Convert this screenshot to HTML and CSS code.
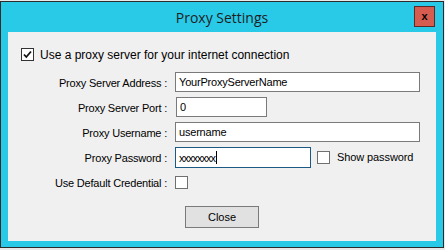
FILE: index.html
```html
<!DOCTYPE html>
<html lang="en">
<head>
    <meta charset="UTF-8">
    <title>Proxy Settings</title>
    <link rel="stylesheet" href="styles.css">
</head>
<body>
    <div class="window">
        <div class="titlebar">
            <span class="title">Proxy Settings</span>
            <button class="close-x">x</button>
        </div>
        <div class="content">
            <label class="check-row">
                <span class="box checked">
                    <svg width="11" height="11" viewBox="0 0 11 11"><path d="M2 5.5 L4.3 8 L9 2.5" fill="none" stroke="#111" stroke-width="1.8"/></svg>
                </span>
                Use a proxy server for your internet connection
            </label>

            <div class="form">
                <span class="label">Proxy Server Address :</span>
                <div class="field"><span class="input wide">YourProxyServerName</span></div>

                <span class="label">Proxy Server Port :</span>
                <div class="field"><span class="input port">0</span></div>

                <span class="label">Proxy Username :</span>
                <div class="field"><span class="input wide">username</span></div>

                <span class="label">Proxy Password :</span>
                <div class="field">
                    <span class="input pass focused"><span class="dots">xxxxxxxx</span><span class="caret"></span></span>
                    <span class="box"></span>
                    <span class="show">Show password</span>
                </div>

                <span class="label">Use Default Credential :</span>
                <div class="field"><span class="box"></span></div>
            </div>

            <div class="actions">
                <button class="button">Close</button>
            </div>
        </div>
    </div>
</body>
</html>
```

FILE: styles.css
```css
body {
    margin: 0;
    background: #e9e9e9;
    font-family: "Liberation Sans", Arial, sans-serif;
    font-size: 11px;
    color: #000;
}
.window {
    margin-top: 1px;
    width: 442px;
    height: 245px;
    border: 1px solid #2b2b2b;
    background: #29c9e8;
    display: flex;
    flex-direction: column;
}
.titlebar {
    height: 30px;
    position: relative;
    display: flex;
    align-items: center;
    justify-content: center;
}
.title {
    font-family: "Open Sans", "Noto Sans", sans-serif;
    font-size: 14px;
    color: #1e1e1e;
    margin-top: 1px;
}
.close-x {
    position: absolute;
    right: 8px;
    top: 4px;
    width: 21px;
    height: 21px;
    background: #d65c50;
    border: 1px solid #5a2a26;
    font-family: "Liberation Sans", Arial, sans-serif;
    font-weight: bold;
    font-size: 11px;
    padding: 0 0 2px 0;
    color: #000;
}
.content {
    margin: 0 7px 6px 7px;
    flex: 1;
    background: #f0f0f0;
    display: flex;
    flex-direction: column;
}
.check-row {
    display: flex;
    align-items: center;
    gap: 6px;
    margin: 16px 0 0 13px;
    height: 13px;
    font-size: 12px;
}
.box {
    width: 11px;
    height: 11px;
    border: 1px solid #707070;
    background: #fff;
    display: inline-flex;
    align-items: center;
    justify-content: center;
    flex: none;
}
.box.checked {
    border-color: #333;
}
.form {
    display: grid;
    grid-template-columns: 159px 1fr;
    column-gap: 8px;
    row-gap: 5px;
    margin-top: 11px;
    grid-auto-rows: 20px;
}
.label {
    text-align: right;
    align-self: center;
    padding-top: 1px;
    letter-spacing: -0.2px;
}
.field {
    display: flex;
    align-items: center;
    gap: 6px;
}
.input {
    box-sizing: border-box;
    height: 20px;
    border: 1px solid #7a7a7a;
    background: #fff;
    padding: 0 3px;
    display: flex;
    align-items: center;
    font-size: 11px;
    letter-spacing: -0.2px;
}
.wide {
    width: 245px;
}
.port {
    width: 91px;
    margin-left: 1px;
}
.pass {
    width: 136px;
    height: 21px;
    margin-top: 1px;
}
.focused {
    border-color: #1b5a85;
}
.dots {
    letter-spacing: -1px;
}
.caret {
    width: 1px;
    height: 13px;
    background: #000;
    margin-left: 1px;
}
.show {
    margin-left: 1px;
    letter-spacing: -0.1px;
}
.actions {
    display: flex;
    justify-content: center;
    margin-top: 14px;
}
.button {
    width: 74px;
    height: 22px;
    background: #e1e1e1;
    border: 1px solid #7a7a7a;
    font-family: "Liberation Sans", Arial, sans-serif;
    font-size: 11px;
    color: #000;
    padding: 0;
}
```
